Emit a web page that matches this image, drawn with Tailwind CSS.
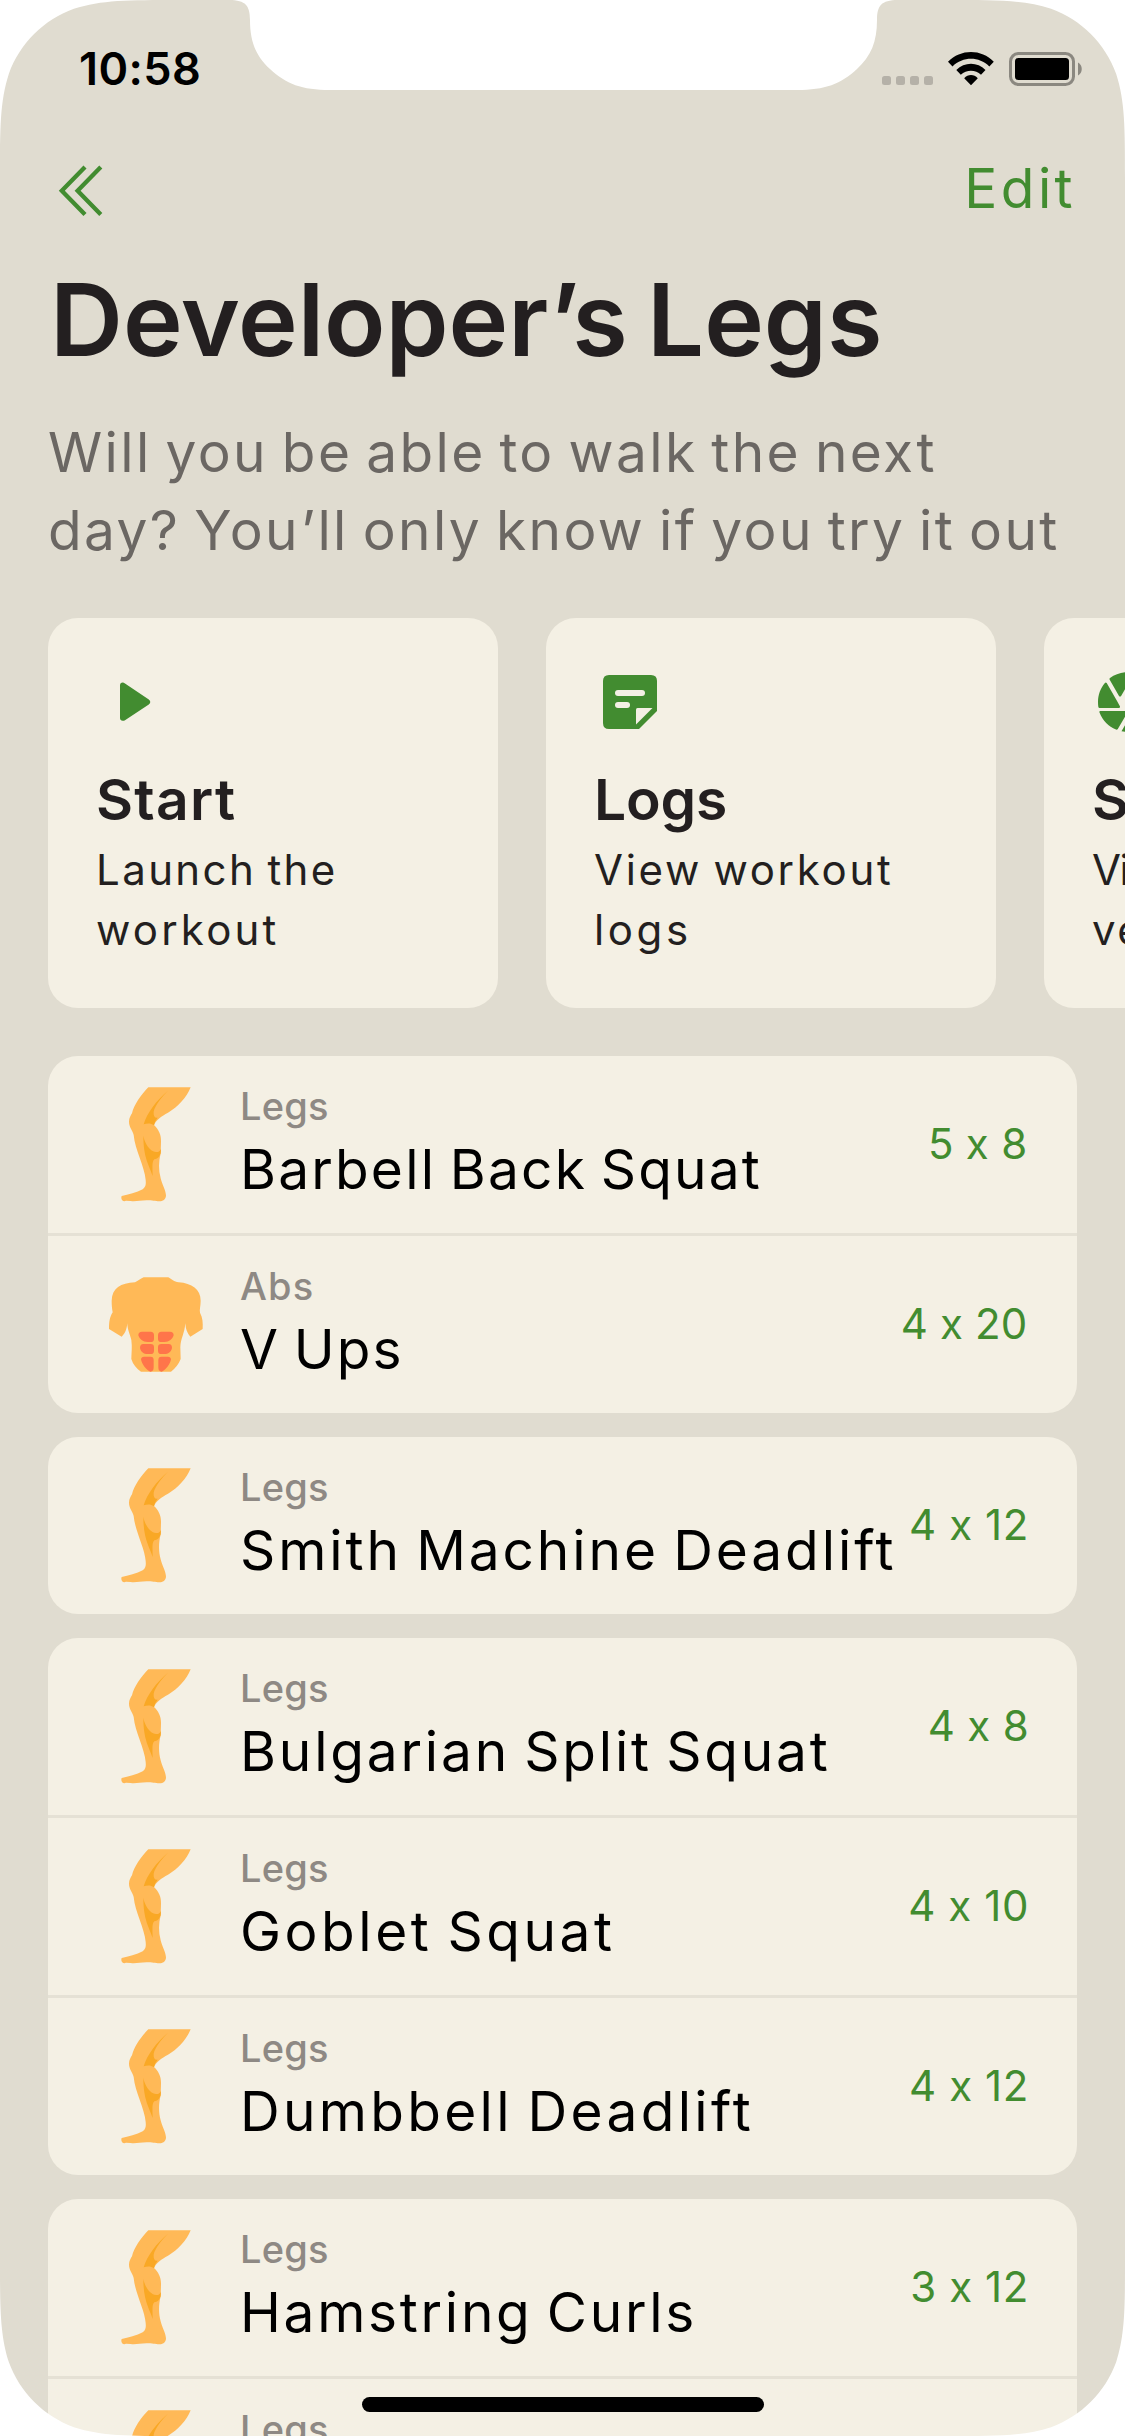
<!DOCTYPE html>
<html lang="en">
<head>
<meta charset="utf-8">
<title>Developer’s Legs</title>
<script src="https://cdn.jsdelivr.net/npm/@tailwindcss/browser@4"></script>
</head>
<body class="bg-white">
<svg class="hidden">
  <symbol id="leg" viewBox="0 0 330 420">
    <path fill="#ffb957" d="M145 52H272C260 82 234 111 204 128C184 139 170 148 162 165C176 178 184 195 183 215L182 250C176 275 175 300 182 325C187 345 197 360 198 376C198 386 192 394 178 394C165 394 158 391 140 391C120 391 108 395 92 393L78 392L73 394C66 393 62 385 65 378C85 374 110 368 128 358C138 350 138 342 137 330C134 290 105 240 101 195C98 180 87 172 87 155C87 143 92 138 96 130C102 105 122 75 145 52Z"/>
    <path fill="#f9a825" d="M204 62C185 80 165 107 161 125C160 138 164 144 173 143C168 150 164 155 162 166C152 159 142 160 131 163C140 130 170 90 204 62Z"/>
    <path fill="#f9a825" d="M130 197C134 220 150 245 168 246C175 247 180 243 183 236L182 250C178 262 172 267 163 268C155 275 158 295 158 318C148 286 130 265 130 197Z"/>
  </symbol>
  <symbol id="torso" viewBox="0 0 330 390">
    <path fill="#ffb957" d="M131 52H205C215 57 222 66 236 67C275 70 302 88 302 122C302 138 298 148 300 158C308 172 309 188 308 207L271 230C262 220 257 208 256 190C254 220 242 235 241 262L242 297C236 312 226 326 213 335H123C110 326 99 314 94 297C94 280 97 262 94 240C90 222 82 210 82 190C80 210 74 222 65 230L27 207C27 185 29 172 38 157C36 145 35 138 35 122C36 85 62 69 105 67C115 63 120 56 131 52Z"/>
    <g fill="#ff754a">
      <path id="ab-left" d="M126 215H152Q162 215 162 226V236Q162 246 152 246H143C128 246 119 238 115 226Q115 215 126 215ZM130 252H152Q162 252 162 262V272Q162 282 152 282H143C131 282 123 276 120 264Q120 252 130 252ZM132 290H152Q161 290 161 300V322Q161 335 151 335C137 329 126 313 123 298Q124 290 132 290Z"/>
      <use href="#ab-left" transform="matrix(-1 0 0 1 336 0)"/>
    </g>
  </symbol>
</svg>

<div class="relative flex h-[2436px] w-[1125px] flex-col overflow-hidden bg-[#e0dcd0] font-[Inter,sans-serif] text-[#231f20]">

  <!-- Status bar -->
  <div class="flex justify-between pt-[42px] pr-[43px] pl-[79px]">
    <div class="text-[45px] leading-[54px] font-semibold tracking-[0.4px] text-black">10:58</div>
    <svg class="mt-[6px] h-[42px] w-[204px]" viewBox="878 48 204 42">
      <g fill="#b5b1a8"><rect x="882" y="76" width="9" height="9" rx="2.5"/><rect x="896" y="76" width="9" height="9" rx="2.5"/><rect x="910" y="76" width="9" height="9" rx="2.5"/><rect x="924" y="76" width="9" height="9" rx="2.5"/></g>
      <path d="M948 61.8C960.500 48.700 981.500 48.700 993.800 61.800L989.300 66.400C979 56.300 963 56.300 952.500 66.400ZM956.300 70C964.500 61.500 977.500 61.500 985.500 70L981 74.700C975.500 69.300 966.500 69.300 960.800 74.700ZM964.200 78.200C968 74 974 74 977.800 78.200L971 85.200Z"/>
      <rect x="1010.500" y="53.500" width="63" height="31" rx="8" fill="none" stroke="#8b8880" stroke-width="3"/>
      <rect x="1015" y="58" width="54" height="22" rx="3.500"/>
      <path fill="#8b8880" d="M1078 62.500C1083 65 1083 73 1078 75.500Z"/>
    </svg>
  </div>

  <!-- Navigation -->
  <div class="mt-[61px] flex h-[60px] justify-between pr-[49px] pl-[57px]">
    <svg class="mt-[6px] h-[56px] w-[48px]" viewBox="57 163 48 56" fill="none" stroke="#428c30" stroke-width="4.300"><path d="M85 167L61.800 190.700L85 214.500M100.800 167L77.600 190.700L100.800 214.500"/></svg>
    <div class="pt-px text-[55px] leading-[60px] tracking-[3.4px] text-[#428c30]">Edit</div>
  </div>

  <h1 class="mt-[42px] pl-[50px] text-[101px] leading-[120px] font-semibold tracking-[-0.05px] whitespace-nowrap [word-spacing:-6px]">Developer’s Legs</h1>
  <p class="mt-[34px] pl-[48px] text-[55px] leading-[78px] tracking-[2.38px] whitespace-nowrap [word-spacing:-4px] text-[#6b6763]">Will you be able to walk the next<br>day? You’ll only know if you try it out</p>

  <!-- Action cards -->
  <div class="mt-[49px] flex gap-[48px] pl-[48px]">
    <div class="flex h-[390px] w-[450px] shrink-0 flex-col rounded-[30px] bg-[#f4f0e4] p-[48px]">
      <svg class="size-[72px] shrink-0" viewBox="0 0 72 72" fill="#428c30"><path d="M24 19.500Q24 16.700 26.700 16.500Q27.800 16.500 29 17.400L52.800 33.500Q55.800 36 52.800 38.500L29 54.200Q27.800 55 26.700 54.800Q24 54.500 24 52Z"/></svg>
      <div class="mt-[26px] text-[57px] leading-[72px] font-semibold tracking-[1.28px]">Start</div>
      <div class="mt-[4px] text-[42px] leading-[60px] tracking-[2.4px] [word-spacing:-3px]">Launch the<br><span class="tracking-[3.19px]">workout</span></div>
    </div>
    <div class="flex h-[390px] w-[450px] shrink-0 flex-col rounded-[30px] bg-[#f4f0e4] p-[48px]">
      <svg class="size-[72px] shrink-0" viewBox="0 0 24 24"><path fill="#428c30" d="M5 3H19Q21 3 21 5V15L15 21H5Q3 21 3 19V5Q3 3 5 3Z"/><g fill="#f4f0e4"><rect x="7" y="8" width="10" height="2" rx="1"/><rect x="7" y="12" width="5" height="2" rx="1"/><path d="M14.500 14H19.500L14 19.500V14.500Q14 14 14.500 14Z"/></g></svg>
      <div class="mt-[26px] text-[57px] leading-[72px] font-semibold tracking-[-0.23px]">Logs</div>
      <div class="mt-[4px] text-[42px] leading-[60px] tracking-[2.68px] whitespace-nowrap [word-spacing:-3px]">View workout<br><span class="tracking-[3.6px]">logs</span></div>
    </div>
    <div class="flex h-[390px] w-[450px] shrink-0 flex-col rounded-[30px] bg-[#f4f0e4] p-[48px]">
      <svg class="size-[72px] shrink-0" viewBox="0 0 24 24" fill="#428c30"><path d="M13.730 15L9.830 21.760C10.530 21.910 11.250 22 12 22C14.400 22 16.600 21.150 18.320 19.750L14.660 13.400ZM2.800 15Q2.300 15 2.500 15.500C3.600 18.300 5.500 20.200 8 21.200Q8.400 21.300 8.600 21L12.120 15ZM8.300 11.600L4.900 5.700Q4.600 5.300 4.300 5.700C2.800 7.500 2 9.600 2 12C2 12.600 2.050 13.100 2.100 13.600Q2.200 14 2.500 14H8.900Q9.500 13.900 9.300 13.400ZM21.800 10H14.310L14.600 10.500L19.360 18.750C21 16.970 22 14.600 22 12C22 11.310 21.930 10.640 21.800 10ZM21.540 9C20.620 6.070 18.390 3.740 15.550 2.660L11.880 9ZM9.700 10L14.170 2.240C13.470 2.090 12.750 2 12 2C9.700 2 7.700 2.700 6 4Q5.700 4.300 5.900 4.600L9 10Q9.300 10.400 9.700 10Z"/></svg>
      <div class="mt-[26px] text-[57px] leading-[72px] font-semibold">Share</div>
      <div class="mt-[4px] text-[42px] leading-[60px] tracking-[-1.5px]">Visual<br><span class="tracking-[2.4px]">version</span></div>
    </div>
  </div>

  <!-- Exercise groups -->
  <div class="mt-[48px] flex flex-col gap-[24px] px-[48px] whitespace-nowrap">
    <div class="shrink-0 divide-y-3 divide-[#e5e1d5] rounded-[30px] bg-[#f4f0e4]">
      <div class="flex h-[180px] pr-[48px] pl-[52px]">
        <svg class="mt-[14px] h-[140px] w-[110px]"><use href="#leg"/></svg>
        <div class="ml-[30px] flex-1 pt-[26px]"><div class="text-[38px] leading-[48px] font-medium tracking-[0.22px] text-[#8e8984]">Legs</div><div class="mt-[7px] text-[55px] leading-[64px] tracking-[2.19px] [word-spacing:-4px] text-black">Barbell Back Squat</div></div>
        <div class="h-[174px] text-[42px] leading-[175px] tracking-[0.3px] text-[#428c30] pr-[1.500px]">5 x 8</div>
      </div>
      <div class="flex h-[177px] pr-[48px] pl-[52px]">
        <svg class="mt-[24px] h-[130px] w-[110px]"><use href="#torso"/></svg>
        <div class="ml-[30px] flex-1 pt-[26px]"><div class="text-[38px] leading-[48px] font-medium tracking-[1.18px] text-[#8e8984]">Abs</div><div class="mt-[7px] text-[55px] leading-[64px] tracking-[2.15px] [word-spacing:-4px] text-black">V Ups</div></div>
        <div class="h-[174px] text-[42px] leading-[175px] tracking-[0.14px] text-[#428c30] pr-[1.500px]">4 x 20</div>
      </div>
    </div>

    <div class="shrink-0 rounded-[30px] bg-[#f4f0e4]">
      <div class="flex h-[177px] pr-[48px] pl-[52px]">
        <svg class="mt-[14px] h-[140px] w-[110px] shrink-0"><use href="#leg"/></svg>
        <div class="ml-[30px] w-0 flex-1 pt-[26px]"><div class="text-[38px] leading-[48px] font-medium tracking-[0.22px] text-[#8e8984]">Legs</div><div class="mt-[7px] text-[55px] leading-[64px] tracking-[2.9px] [word-spacing:-4px] text-black">Smith Machine Deadlift</div></div>
        <div class="h-[174px] text-[42px] leading-[175px] tracking-[0.6px] text-[#428c30]">4 x 12</div>
      </div>
    </div>

    <div class="shrink-0 divide-y-3 divide-[#e5e1d5] rounded-[30px] bg-[#f4f0e4]">
      <div class="flex h-[180px] pr-[48px] pl-[52px]">
        <svg class="mt-[14px] h-[140px] w-[110px]"><use href="#leg"/></svg>
        <div class="ml-[30px] flex-1 pt-[26px]"><div class="text-[38px] leading-[48px] font-medium tracking-[0.22px] text-[#8e8984]">Legs</div><div class="mt-[7px] text-[55px] leading-[64px] tracking-[2.81px] [word-spacing:-4px] text-black">Bulgarian Split Squat</div></div>
        <div class="h-[174px] text-[42px] leading-[175px] tracking-[0.3px] text-[#428c30]">4 x 8</div>
      </div>
      <div class="flex h-[180px] pr-[48px] pl-[52px]">
        <svg class="mt-[14px] h-[140px] w-[110px]"><use href="#leg"/></svg>
        <div class="ml-[30px] flex-1 pt-[26px]"><div class="text-[38px] leading-[48px] font-medium tracking-[0.22px] text-[#8e8984]">Legs</div><div class="mt-[7px] text-[55px] leading-[64px] tracking-[3.55px] [word-spacing:-4px] text-black">Goblet Squat</div></div>
        <div class="h-[174px] text-[42px] leading-[175px] tracking-[0.6px] text-[#428c30]">4 x 10</div>
      </div>
      <div class="flex h-[177px] pr-[48px] pl-[52px]">
        <svg class="mt-[14px] h-[140px] w-[110px]"><use href="#leg"/></svg>
        <div class="ml-[30px] flex-1 pt-[26px]"><div class="text-[38px] leading-[48px] font-medium tracking-[0.22px] text-[#8e8984]">Legs</div><div class="mt-[7px] text-[55px] leading-[64px] tracking-[3.3px] [word-spacing:-4px] text-black">Dumbbell Deadlift</div></div>
        <div class="h-[174px] text-[42px] leading-[175px] tracking-[0.6px] text-[#428c30]">4 x 12</div>
      </div>
    </div>

    <div class="shrink-0 divide-y-3 divide-[#e5e1d5] rounded-[30px] bg-[#f4f0e4]">
      <div class="flex h-[180px] pr-[48px] pl-[52px]">
        <svg class="mt-[14px] h-[140px] w-[110px]"><use href="#leg"/></svg>
        <div class="ml-[30px] flex-1 pt-[26px]"><div class="text-[38px] leading-[48px] font-medium tracking-[0.22px] text-[#8e8984]">Legs</div><div class="mt-[7px] text-[55px] leading-[64px] tracking-[2.72px] [word-spacing:-4px] text-black">Hamstring Curls</div></div>
        <div class="h-[174px] text-[42px] leading-[175px] tracking-[0.6px] text-[#428c30]">3 x 12</div>
      </div>
      <div class="flex h-[177px] pr-[48px] pl-[52px]">
        <svg class="mt-[14px] h-[140px] w-[110px]"><use href="#leg"/></svg>
        <div class="ml-[30px] flex-1 pt-[26px]"><div class="text-[38px] leading-[48px] font-medium tracking-[0.22px] text-[#8e8984]">Legs</div></div>
      </div>
    </div>
  </div>

  <!-- Device shape: rounded screen corners, notch and home indicator -->
  <svg class="absolute inset-0 h-[2436px] w-[1125px]" viewBox="0 0 1125 2436" fill="#fff">
    <path id="corner" d="M0 0H178.900C127.400 0 101.600 0 73.900 8.800C43.600 19.800 19.800 43.600 8.800 73.900C0 101.600 0 127.400 0 178.900Z"/>
    <use href="#corner" transform="matrix(-1 0 0 1 1125 0)"/>
    <use href="#corner" transform="matrix(1 0 0 -1 0 2436)"/>
    <use href="#corner" transform="matrix(-1 0 0 -1 1125 2436)"/>
    <path d="M229 0C246 0 250 6 250 20C250 42 256 56 270 69C286 84 302 90 330 90H797C825 90 841 84 857 69C871 56 877 42 877 20C877 6 881 0 898 0Z"/>
    <rect x="362" y="2397" width="402" height="15" rx="7.500" fill="#000"/>
  </svg>
</div>
</body>
</html>
